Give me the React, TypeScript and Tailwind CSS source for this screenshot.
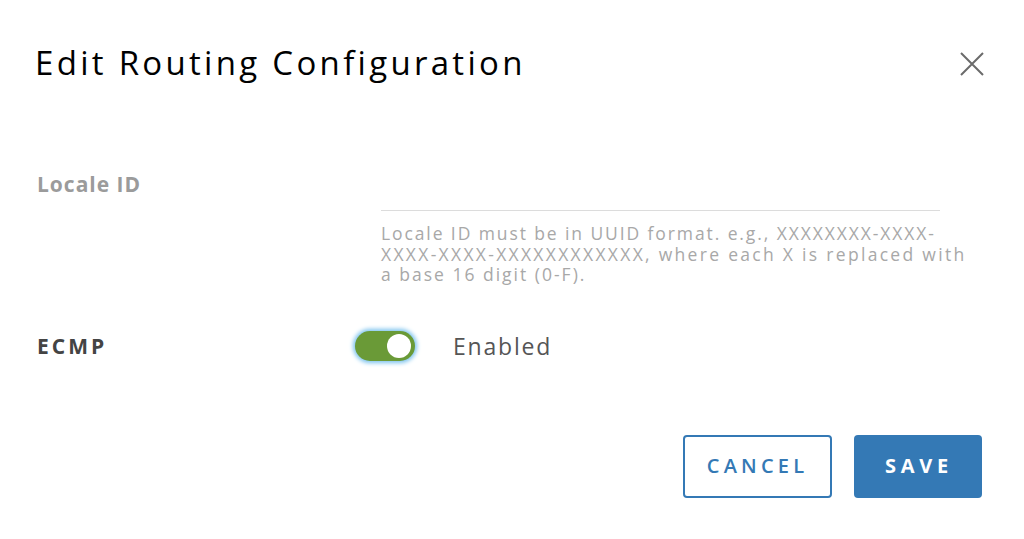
import React from "react";

export default function App() {
  return (
    <div className="w-[1024px] h-[539px] bg-white relative overflow-hidden" style={{ fontFamily: "'Open Sans', 'Noto Sans', sans-serif" }}>
      <div className="flex items-start justify-between pl-[35px] pr-[38px] pt-[40px]">
        <h1 className="text-[33px] leading-[46px] text-black font-normal tracking-[3.3px] whitespace-nowrap">Edit Routing Configuration</h1>
        <button className="mt-[10px] w-[28px] h-[28px] flex items-center justify-center text-[#6b6b6b]">
          <svg width="26" height="26" viewBox="0 0 26 26" fill="none" stroke="currentColor" strokeWidth="2">
            <path d="M2 2 L24 24 M24 2 L2 24" />
          </svg>
        </button>
      </div>

      <div className="flex pl-[37px] mt-[85px]">
        <div className="w-[344px] text-[21px] font-bold text-[#9b9b9b] leading-[24px] pt-[1px] tracking-[1px]">Locale ID</div>
        <div className="flex flex-col">
          <div className="w-[559px] h-[40px] border-b border-[#dcdcdc]"></div>
          <div className="mt-[12px] w-[620px] text-[17.5px] leading-[20.5px] text-[#a8a8a8] whitespace-nowrap">
            <div className="tracking-[1.9px]">Locale ID must be in UUID format. e.g., XXXXXXXX-XXXX-</div>
            <div className="tracking-[2.3px]">XXXX-XXXX-XXXXXXXXXXXX, where each X is replaced with</div>
            <div className="tracking-[2px]">a base 16 digit (0-F).</div>
          </div>
        </div>
      </div>

      <div className="flex items-center pl-[37px] mt-[46px]">
        <div className="w-[318px] text-[21px] font-bold text-[#444] leading-[24px] tracking-[3px]">ECMP</div>
        <div className="w-[60px] h-[30px] rounded-full bg-[#6a9a37] shadow-[0_0_4px_2px_#7cc3ee] flex items-center justify-end pr-[4px]">
          <div className="w-[24px] h-[24px] rounded-full bg-white"></div>
        </div>
        <div className="ml-[38px] text-[23px] text-[#555] leading-[28px] tracking-[1.8px]">Enabled</div>
      </div>

      <div className="flex justify-end gap-[22px] pr-[42px] mt-[74px]">
        <button className="w-[149px] h-[63px] rounded-[4px] border-2 border-[#3479b5] text-[#3479b5] text-[20px] font-semibold tracking-[4.2px] bg-white">CANCEL</button>
        <button className="w-[128px] h-[63px] rounded-[4px] bg-[#3479b5] text-white text-[20px] font-bold tracking-[4.8px] pl-[2px]">SAVE</button>
      </div>
    </div>
  );
}
